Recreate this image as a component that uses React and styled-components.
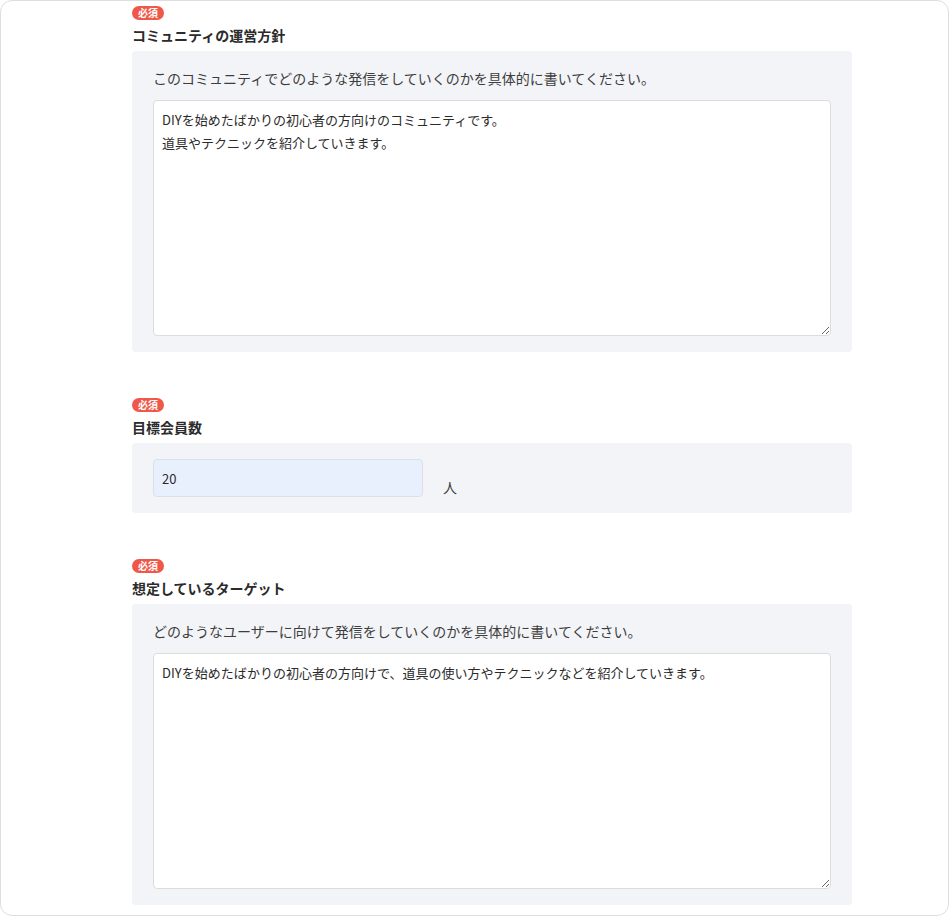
import React, { useState } from "react";
import styled, { createGlobalStyle } from "styled-components";

const GlobalStyle = createGlobalStyle`
  html, body {
    margin: 0;
    padding: 0;
    background: #ffffff;
  }
  body {
    font-family: "Noto Sans CJK JP", "Noto Sans", sans-serif;
    color: #333333;
  }
  * {
    box-sizing: border-box;
  }
`;

const Frame = styled.div`
  width: 949px;
  height: 916px;
  border: 1px solid #dedede;
  border-radius: 12px;
  overflow: hidden;
  padding: 5px 0 0 131px;
`;

const Form = styled.div`
  width: 720px;
  display: flex;
  flex-direction: column;
  gap: 46px;
`;

const Field = styled.section`
  display: flex;
  flex-direction: column;
`;

const Badge = styled.span`
  align-self: flex-start;
  display: inline-flex;
  align-items: center;
  justify-content: center;
  height: 14px;
  padding: 0 6px;
  border-radius: 7px;
  background: #ef5849;
  color: #ffffff;
  font-size: 10px;
  font-weight: 700;
  line-height: 1;
  margin-bottom: 5px;
`;

const Label = styled.h3`
  margin: 0 0 6px;
  font-size: 14px;
  font-weight: 700;
  line-height: 20px;
  color: #2b2b2b;
`;

const Panel = styled.div`
  background: #f3f4f8;
  border-radius: 4px;
  padding: ${(p) => (p.$compact ? "16px 21px" : "17px 21px 16px")};
`;

const Hint = styled.p`
  margin: 0 0 12px;
  font-size: 14px;
  line-height: 20px;
  color: #3d3d3d;
`;

const TextArea = styled.textarea`
  display: block;
  width: 678px;
  height: 236px;
  padding: 7px 8px;
  border: 1px solid #dcdcdc;
  border-radius: 4px;
  background: #ffffff;
  font-family: "Noto Sans CJK JP", "Noto Sans", sans-serif;
  font-size: 13px;
  line-height: 23px;
  color: #2b2b2b;
  resize: vertical;
  outline: none;
`;

const Row = styled.div`
  display: flex;
  align-items: flex-end;
  gap: 20px;
`;

const NumberInput = styled.input`
  width: 270px;
  height: 38px;
  padding: 0 8px;
  border: 1px solid #dcdfe6;
  border-radius: 4px;
  background: #e8f0fe;
  font-family: "Noto Sans CJK JP", "Noto Sans", sans-serif;
  font-size: 13px;
  color: #2b2b2b;
  outline: none;
`;

const Unit = styled.span`
  font-size: 14px;
  line-height: 20px;
  color: #3d3d3d;
`;

export default function App() {
  const [policy, setPolicy] = useState(
    "DIYを始めたばかりの初心者の方向けのコミュニティです。\n道具やテクニックを紹介していきます。"
  );
  const [members, setMembers] = useState("20");
  const [target, setTarget] = useState(
    "DIYを始めたばかりの初心者の方向けで、道具の使い方やテクニックなどを紹介していきます。"
  );

  return (
    <>
      <GlobalStyle />
      <Frame>
        <Form>
          <Field>
            <Badge>必須</Badge>
            <Label>コミュニティの運営方針</Label>
            <Panel>
              <Hint>このコミュニティでどのような発信をしていくのかを具体的に書いてください。</Hint>
              <TextArea value={policy} onChange={(e) => setPolicy(e.target.value)} />
            </Panel>
          </Field>

          <Field>
            <Badge>必須</Badge>
            <Label>目標会員数</Label>
            <Panel $compact>
              <Row>
                <NumberInput value={members} onChange={(e) => setMembers(e.target.value)} />
                <Unit>人</Unit>
              </Row>
            </Panel>
          </Field>

          <Field>
            <Badge>必須</Badge>
            <Label>想定しているターゲット</Label>
            <Panel>
              <Hint>どのようなユーザーに向けて発信をしていくのかを具体的に書いてください。</Hint>
              <TextArea value={target} onChange={(e) => setTarget(e.target.value)} />
            </Panel>
          </Field>
        </Form>
      </Frame>
    </>
  );
}
